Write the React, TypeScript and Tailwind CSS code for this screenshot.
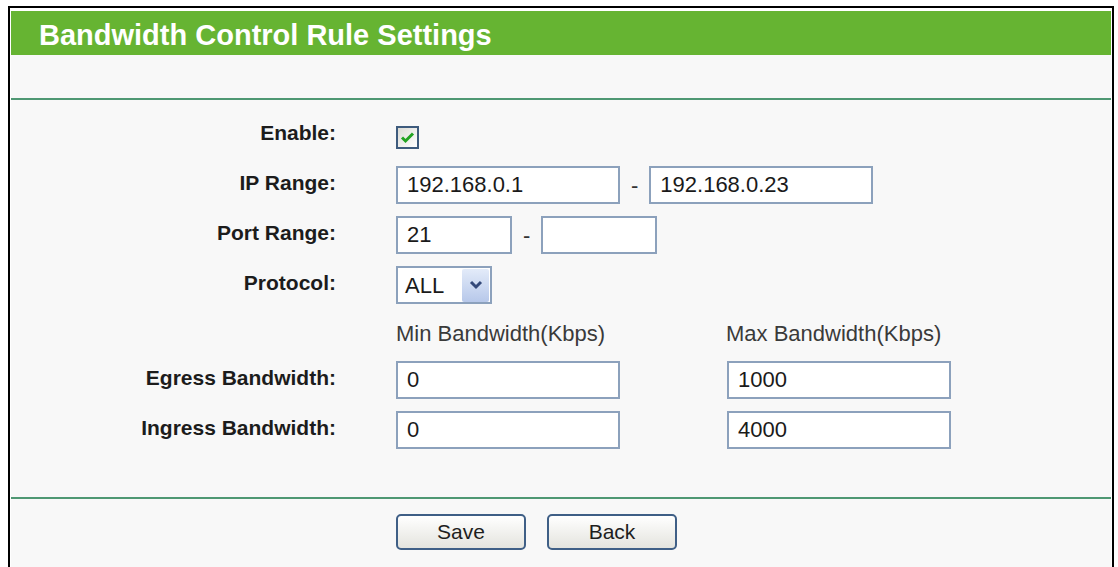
import type { ReactNode } from "react";

function Row({ label, children }: { label?: string; children: ReactNode }) {
  return (
    <div className="flex h-[50px] items-center">
      <div className="w-[325px] pb-[5px] text-right text-[21px] font-bold text-[#1c1c1c]">
        {label}
      </div>
      <div className="ml-[60px] flex items-center">{children}</div>
    </div>
  );
}

function TextBox({ value, width }: { value: string; width: string }) {
  return (
    <input
      type="text"
      defaultValue={value}
      className={`h-[38px] ${width} border-2 border-[#8ca1bc] bg-white px-[9px] text-[22px] text-[#1a1a1a] outline-none`}
    />
  );
}

function Dash() {
  return <span className="mx-[11px] text-[22px] text-[#333]">-</span>;
}

function CheckBox() {
  return (
    <div className="mt-[5px] flex h-[23px] w-[23px] items-center justify-center border-2 border-[#3e5b7d] bg-linear-to-br from-[#dcdcd6] to-white">
      <svg width="15" height="13" viewBox="0 0 15 13">
        <polyline
          points="2,6.5 5.5,10 13,2.5"
          fill="none"
          stroke="#22a322"
          strokeWidth="3"
        />
      </svg>
    </div>
  );
}

function Select() {
  return (
    <div className="flex h-[38px] w-[96px] items-center border-2 border-[#8ca1bc] bg-white pl-[7px] pr-[1px]">
      <span className="flex-1 text-[22px] text-[#1a1a1a]">ALL</span>
      <div className="flex h-[33px] w-[27px] items-center justify-center rounded-[2px] bg-linear-to-b from-[#e3ebf9] to-[#b7c8ea]">
        <svg width="14" height="10" viewBox="0 0 14 10">
          <polyline
            points="2,2 7,7 12,2"
            fill="none"
            stroke="#34497a"
            strokeWidth="3"
          />
        </svg>
      </div>
    </div>
  );
}

function Button({ children }: { children: ReactNode }) {
  return (
    <button className="h-[36px] w-[130px] rounded-[5px] border-2 border-[#3f5f86] bg-linear-to-b from-white to-[#e4e4de] text-[21px] text-[#1e1e1e]">
      {children}
    </button>
  );
}

export default function App() {
  return (
    <div className="min-h-screen bg-white font-['Liberation_Sans',Arial,sans-serif]">
      <div className="ml-[8px] mt-[6px] w-[1106px] border-x-2 border-t-2 border-black px-[1px] pt-[3px]">
        <div className="h-[44px] bg-[#66b432] pl-[28px] pt-[10px] text-[29px] font-bold leading-none text-white">
          Bandwidth Control Rule Settings
        </div>

        <div className="bg-[#f8f8f8] pb-[40px]">
          <div className="h-[43px]" />
          <div className="h-[2px] bg-[#4f9873]" />

          <div className="pt-[10px]">
            <Row label="Enable:">
              <CheckBox />
            </Row>
            <Row label="IP Range:">
              <TextBox value="192.168.0.1" width="w-[224px]" />
              <Dash />
              <TextBox value="192.168.0.23" width="w-[224px]" />
            </Row>
            <Row label="Port Range:">
              <TextBox value="21" width="w-[116px]" />
              <Dash />
              <TextBox value="" width="w-[116px]" />
            </Row>
            <Row label="Protocol:">
              <Select />
            </Row>

            <div className="flex h-[45px] pl-[385px] pt-[7px] text-[22px] text-[#3a3a3a]">
              <span className="w-[330px]">Min Bandwidth(Kbps)</span>
              <span>Max Bandwidth(Kbps)</span>
            </div>

            <Row label="Egress Bandwidth:">
              <TextBox value="0" width="w-[224px]" />
              <div className="w-[107px]" />
              <TextBox value="1000" width="w-[224px]" />
            </Row>
            <Row label="Ingress Bandwidth:">
              <TextBox value="0" width="w-[224px]" />
              <div className="w-[107px]" />
              <TextBox value="4000" width="w-[224px]" />
            </Row>
          </div>

          <div className="h-[42px]" />
          <div className="h-[2px] bg-[#4f9873]" />

          <div className="flex gap-[21px] pl-[385px] pt-[15px]">
            <Button>Save</Button>
            <Button>Back</Button>
          </div>
        </div>
      </div>
    </div>
  );
}
